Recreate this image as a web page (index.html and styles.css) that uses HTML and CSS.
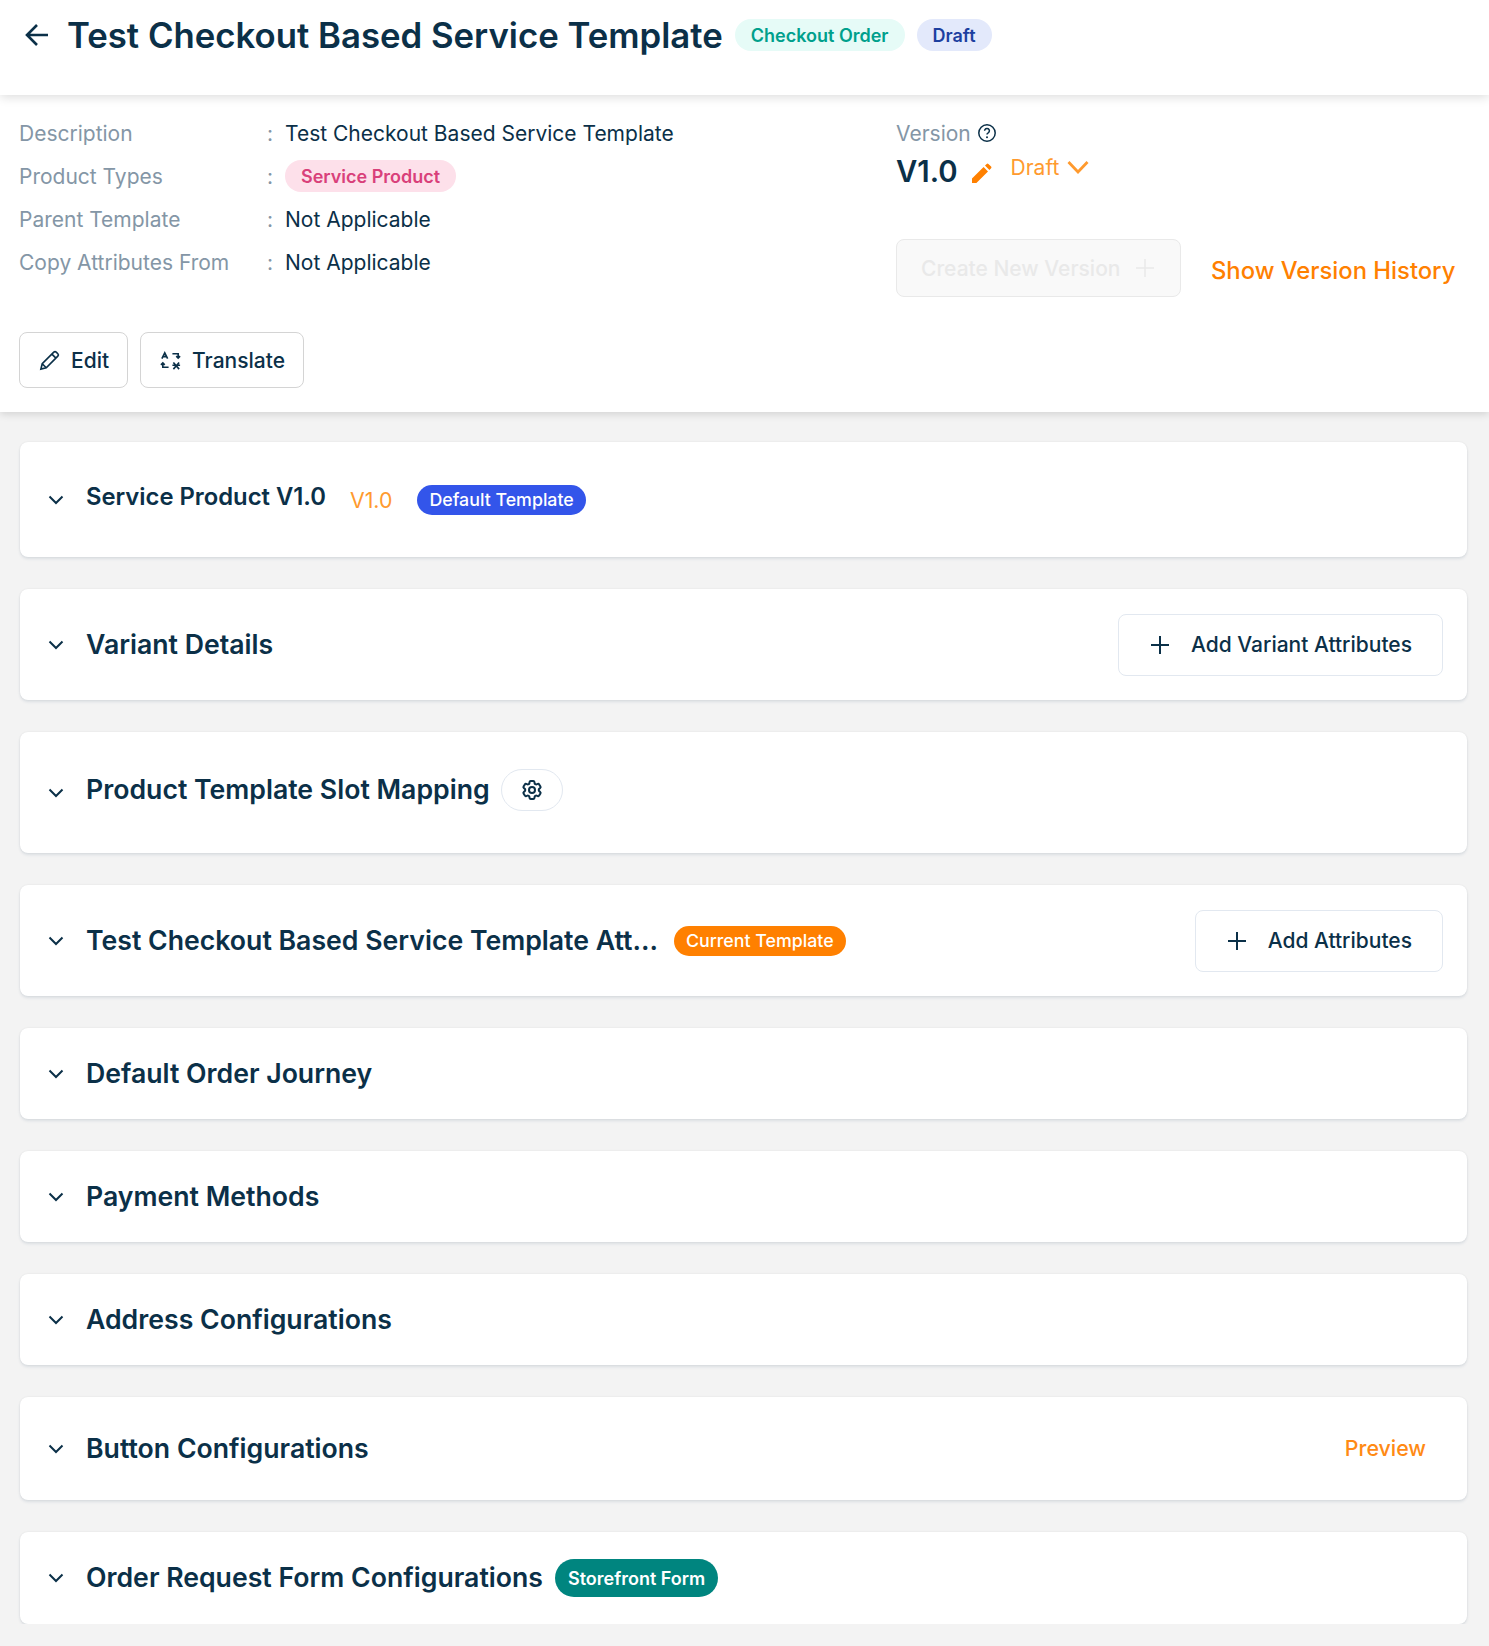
FILE: index.html
```html
<!DOCTYPE html>
<html lang="en">
  <head>
    <meta charset="UTF-8" />
    <title>Test Checkout Based Service Template</title>
    <link rel="stylesheet" href="styles.css">
  </head>
  <body>
    <header class="topbar">
      <svg class="back-icon" viewBox="0 0 28 28"><path d="M25 14H4M14 4 4 14l10 10" /></svg>
      <h1>Test Checkout Based Service Template</h1>
      <span class="pill pill-teal">Checkout Order</span>
      <span class="pill pill-blue">Draft</span>
    </header>

    <section class="info">
      <div class="info-top">
        <div class="details">
          <div class="label">Description</div>
          <div class="colon">:</div>
          <div class="value">Test Checkout Based Service Template</div>
          <div class="label">Product Types</div>
          <div class="colon">:</div>
          <div class="value"><span class="pill pill-pink">Service Product</span></div>
          <div class="label">Parent Template</div>
          <div class="colon">:</div>
          <div class="value">Not Applicable</div>
          <div class="label">Copy Attributes From</div>
          <div class="colon">:</div>
          <div class="value">Not Applicable</div>
        </div>
        <div class="version">
          <div class="version-label">
            Version
            <svg class="help-icon" viewBox="0 0 20 20">
              <circle cx="10" cy="10" r="8.2" />
              <path d="M7.6 7.8a2.4 2.4 0 1 1 3.6 2.1c-.8.4-1.2.9-1.2 1.7" />
              <circle class="dot" cx="10" cy="14.3" r="1" />
            </svg>
          </div>
          <div class="version-row">
            <span class="version-num">V1.0</span>
            <svg class="edit-solid" viewBox="0 0 20 20"><path d="M0 20v-4.4L11.6 4l4.4 4.4L4.4 20zM13 2.6l1.7-1.7a1.2 1.2 0 0 1 1.7 0l2.7 2.7a1.2 1.2 0 0 1 0 1.7L17.400 7z" /></svg>
            <span class="version-status">Draft</span>
            <svg class="status-chevron" viewBox="0 0 22 14"><path d="M1.500 2 11 12l9.500-10" /></svg>
          </div>
          <div class="version-actions">
            <button class="btn-disabled">Create New Version <svg class="plus-light" viewBox="0 0 18 18"><path d="M9 0v18M0 9h18" /></svg></button>
            <a class="history-link">Show Version History</a>
          </div>
        </div>
      </div>
      <div class="info-actions">
        <button class="btn-outline">
          <svg class="btn-icon" viewBox="0 0 24 24"><path d="M3 21l1.400-5.600L16.500 3.300a1.800 1.800 0 0 1 2.500 0l1.700 1.700a1.800 1.800 0 0 1 0 2.500L8.600 19.600zM14.500 5.300l4.200 4.200M4.400 15.400l4.200 4.200" /></svg>
          Edit
        </button>
        <button class="btn-outline">
          <svg class="btn-icon" viewBox="0 0 24 24">
            <path d="M3 10l3-6 3 6M4.300 8h3.400M14 5h6v4M18 7.500l2 2 2-2M10 19H4v-4M6 16.500l-2-2-2 2M15 14l6 7M21 14l-6 7M14 17h8" />
          </svg>
          Translate
        </button>
      </div>
    </section>

    <main class="cards">
      <div class="card card-a">
        <svg class="chevron" viewBox="0 0 16 10"><path d="M1.500 1.500 8 8l6.500-6.500" /></svg>
        <h2 class="card-title small">Service Product V1.0</h2>
        <span class="card-version">V1.0</span>
        <span class="tag tag-blue">Default Template</span>
      </div>
      <div class="card card-b">
        <svg class="chevron" viewBox="0 0 16 10"><path d="M1.500 1.500 8 8l6.500-6.500" /></svg>
        <h2 class="card-title">Variant Details</h2>
        <button class="btn-add"><svg class="plus-icon" viewBox="0 0 18 18"><path d="M9 0v18M0 9h18" /></svg>Add Variant Attributes</button>
      </div>
      <div class="card card-c">
        <svg class="chevron" viewBox="0 0 16 10"><path d="M1.500 1.500 8 8l6.500-6.500" /></svg>
        <h2 class="card-title raised">Product Template Slot Mapping</h2>
        <button class="btn-gear">
          <svg class="gear-icon" viewBox="0 0 24 24">
            <path d="M9.594 3.940c.09-.542.56-.94 1.110-.94h2.593c.55 0 1.020.398 1.110.94l.213 1.281c.063.374.313.686.645.87.074.04.147.083.22.127.325.196.72.257 1.075.124l1.217-.456a1.125 1.125 0 0 1 1.370.49l1.296 2.247a1.125 1.125 0 0 1-.26 1.431l-1.003.827c-.293.241-.438.613-.43.992a7.723 7.723 0 0 1 0 .255c-.008.378.137.75.43.991l1.004.827c.424.35.534.955.26 1.430l-1.298 2.247a1.125 1.125 0 0 1-1.369.491l-1.217-.456c-.355-.133-.75-.072-1.076.124a6.470 6.470 0 0 1-.22.128c-.331.183-.581.495-.644.869l-.213 1.281c-.09.543-.56.94-1.110.94h-2.594c-.55 0-1.019-.398-1.110-.94l-.213-1.281c-.062-.374-.312-.686-.644-.87a6.520 6.520 0 0 1-.22-.127c-.325-.196-.72-.257-1.076-.124l-1.217.456a1.125 1.125 0 0 1-1.369-.49l-1.297-2.247a1.125 1.125 0 0 1 .26-1.431l1.004-.827c.292-.24.437-.613.43-.991a6.932 6.932 0 0 1 0-.255c.007-.38-.138-.751-.43-.992l-1.004-.827a1.125 1.125 0 0 1-.26-1.430l1.297-2.247a1.125 1.125 0 0 1 1.370-.491l1.216.456c.356.133.751.072 1.076-.124.072-.044.146-.086.22-.128.332-.183.582-.495.644-.869l.214-1.280Z" />
            <circle cx="12" cy="12" r="3" />
          </svg>
        </button>
      </div>
      <div class="card card-b">
        <svg class="chevron" viewBox="0 0 16 10"><path d="M1.500 1.500 8 8l6.500-6.500" /></svg>
        <h2 class="card-title">Test Checkout Based Service Template Att...</h2>
        <span class="tag tag-orange">Current Template</span>
        <button class="btn-add"><svg class="plus-icon" viewBox="0 0 18 18"><path d="M9 0v18M0 9h18" /></svg>Add Attributes</button>
      </div>
      <div class="card card-d">
        <svg class="chevron" viewBox="0 0 16 10"><path d="M1.500 1.500 8 8l6.500-6.500" /></svg>
        <h2 class="card-title">Default Order Journey</h2>
      </div>
      <div class="card card-d">
        <svg class="chevron" viewBox="0 0 16 10"><path d="M1.500 1.500 8 8l6.500-6.500" /></svg>
        <h2 class="card-title">Payment Methods</h2>
      </div>
      <div class="card card-d">
        <svg class="chevron" viewBox="0 0 16 10"><path d="M1.500 1.500 8 8l6.500-6.500" /></svg>
        <h2 class="card-title">Address Configurations</h2>
      </div>
      <div class="card card-e">
        <svg class="chevron" viewBox="0 0 16 10"><path d="M1.500 1.500 8 8l6.500-6.500" /></svg>
        <h2 class="card-title">Button Configurations</h2>
        <a class="preview-link">Preview</a>
      </div>
      <div class="card card-f">
        <svg class="chevron" viewBox="0 0 16 10"><path d="M1.500 1.500 8 8l6.500-6.500" /></svg>
        <h2 class="card-title">Order Request Form Configurations</h2>
        <span class="tag tag-green">Storefront Form</span>
      </div>
    </main>
  </body>
</html>
```

FILE: styles.css
```css
* {
  box-sizing: border-box;
}
body {
  margin: 0;
  background-color: #f3f3f3;
  font-family: "Inter", sans-serif;
  color: #0b3048;
}
button {
  font-family: inherit;
}

/* top bar */
.topbar {
  height: 95px;
  background-color: #fff;
  display: flex;
  align-items: flex-start;
  padding: 17px 0 0 23px;
  position: relative;
  z-index: 1;
  box-shadow: 0 2px 10px rgba(0, 0, 0, 0.14);
}
.back-icon {
  width: 28px;
  height: 28px;
  margin-top: 4px;
  fill: none;
  stroke: #0b3048;
  stroke-width: 2.6;
}
h1 {
  margin: 0 12px 0 16px;
  font-size: 34.750px;
  line-height: 37px;
  font-weight: 600;
}
.pill {
  display: inline-flex;
  align-items: center;
  height: 32px;
  padding: 0 16px;
  border-radius: 16px;
  font-size: 18px;
  font-weight: 600;
  white-space: nowrap;
}
.topbar .pill {
  margin: 2px 12px 0 0;
}
.pill-teal {
  background-color: #e6fbf7;
  color: #00a08c;
}
.pill-blue {
  background-color: #e3e9fb;
  color: #1d3fa0;
}
.pill-pink {
  background-color: #fde0ea;
  color: #d9407a;
}

/* description panel */
.info {
  height: 317px;
  background-color: #fff;
  padding: 17px 19px 0;
  box-shadow: 0 2px 8px rgba(0, 0, 0, 0.14);
}
.info-top {
  display: flex;
  height: 220px;
}
.details {
  width: 877px;
  display: grid;
  grid-template-columns: 248px 18px 1fr;
  grid-template-rows: 42px 44px 43px 42px;
  align-items: center;
  align-content: start;
  font-size: 21px;
}
.label,
.version-label {
  color: #8496a6;
}
.colon {
  color: #8496a6;
}
.version-label {
  display: flex;
  align-items: center;
  gap: 6px;
  font-size: 21px;
  height: 42px;
}
.help-icon {
  width: 20px;
  height: 20px;
  fill: none;
  stroke: #0b3048;
  stroke-width: 1.500;
}
.help-icon .dot {
  fill: #0b3048;
  stroke: none;
}
.version-row {
  display: flex;
  align-items: center;
  height: 35px;
}
.version-num {
  font-size: 29.300px;
  font-weight: 600;
}
.edit-solid {
  width: 20px;
  height: 20px;
  margin: 2px 19px 0 14px;
  fill: #ff8000;
}
.version-status {
  font-size: 21px;
  color: #ff9a2e;
  margin-top: -9px;
}
.status-chevron {
  width: 22px;
  height: 14px;
  margin: -10px 0 0 8px;
  fill: none;
  stroke: #ff9a2e;
  stroke-width: 2.800;
}
.version-actions {
  display: flex;
  align-items: center;
  margin-top: 50px;
}
.btn-disabled {
  display: flex;
  align-items: center;
  gap: 16px;
  width: 285px;
  height: 58px;
  border: 1px solid #e9e9e9;
  border-radius: 8px;
  background-color: #f9f9f9;
  color: #e9e9e9;
  font-size: 21px;
  font-weight: 500;
  padding: 0 0 0 24px;
}
.plus-light {
  width: 18px;
  height: 18px;
  fill: none;
  stroke: #e9e9e9;
  stroke-width: 1.500;
}
.history-link {
  margin: 5px 0 0 30px;
  font-size: 23.800px;
  font-weight: 500;
  color: #ff8000;
}
.info-actions {
  display: flex;
  gap: 12px;
}
.btn-outline {
  display: flex;
  align-items: center;
  gap: 10px;
  height: 56px;
  padding: 0 18px;
  border: 1px solid #d4d4d4;
  border-radius: 8px;
  background-color: #fff;
  color: #0b3048;
  font-size: 21px;
  font-weight: 500;
}
.btn-icon {
  width: 23px;
  height: 23px;
  fill: none;
  stroke: #0b3048;
  stroke-width: 1.700;
}

/* accordion cards */
.cards {
  display: flex;
  flex-direction: column;
  gap: 32px;
  padding: 30px 22px 0 20px;
}
.card {
  display: flex;
  align-items: center;
  padding: 0 24px 0 28px;
  background-color: #fff;
  border-radius: 8px;
  box-shadow: 0 0 2px rgba(0, 0, 0, 0.08), 0 2px 3px rgba(60, 90, 120, 0.12);
}
.card-a {
  height: 115px;
}
.card-b {
  height: 111px;
}
.card-c {
  height: 121px;
}
.card-d {
  height: 91px;
}
.card-e {
  height: 103px;
}
.card-f {
  height: 92px;
}
.chevron {
  width: 16px;
  height: 10px;
  flex-shrink: 0;
  fill: none;
  stroke: #0b3048;
  stroke-width: 2;
}
.card-title {
  margin: 0 0 2px 22px;
  font-size: 26.670px;
  font-weight: 600;
  white-space: nowrap;
}
.card-title.small {
  font-size: 23.800px;
  margin-bottom: 6px;
}
.card-title.raised {
  margin-bottom: 8px;
}
.card-version {
  margin-left: 24px;
  font-size: 21.330px;
  color: #ff9a2e;
}
.tag {
  display: inline-flex;
  align-items: center;
  height: 30px;
  padding: 0 12px;
  border-radius: 15px;
  margin-left: 16px;
  color: #fff;
  font-size: 17.800px;
  font-weight: 500;
}
.tag-blue {
  background-color: #3355ea;
  margin-left: 25px;
}
.tag-orange {
  background-color: #ff8000;
}
.tag-green {
  background-color: #00857f;
  height: 38px;
  padding: 0 13px;
  border-radius: 19px;
  margin-left: 12px;
  font-size: 18px;
  font-weight: 600;
}
.btn-add {
  display: flex;
  align-items: center;
  gap: 22px;
  height: 62px;
  margin-left: auto;
  padding: 0 30px 0 32px;
  border: 1px solid #e2e8f0;
  border-radius: 8px;
  background-color: #fff;
  color: #0b3048;
  font-size: 21px;
  font-weight: 500;
}
.plus-icon {
  width: 18px;
  height: 18px;
  fill: none;
  stroke: #0b3048;
  stroke-width: 2;
}
.btn-gear {
  display: flex;
  align-items: center;
  justify-content: center;
  width: 62px;
  height: 42px;
  margin: 0 0 6px 11px;
  border: 1px solid #e2e8f0;
  border-radius: 21px;
  background-color: #fff;
}
.gear-icon {
  width: 24px;
  height: 24px;
  fill: none;
  stroke: #0b3048;
  stroke-width: 2;
}
.preview-link {
  margin-left: auto;
  margin-right: 17px;
  margin-bottom: 2px;
  font-size: 21.330px;
  font-weight: 500;
  color: #ff8a14;
}
```
